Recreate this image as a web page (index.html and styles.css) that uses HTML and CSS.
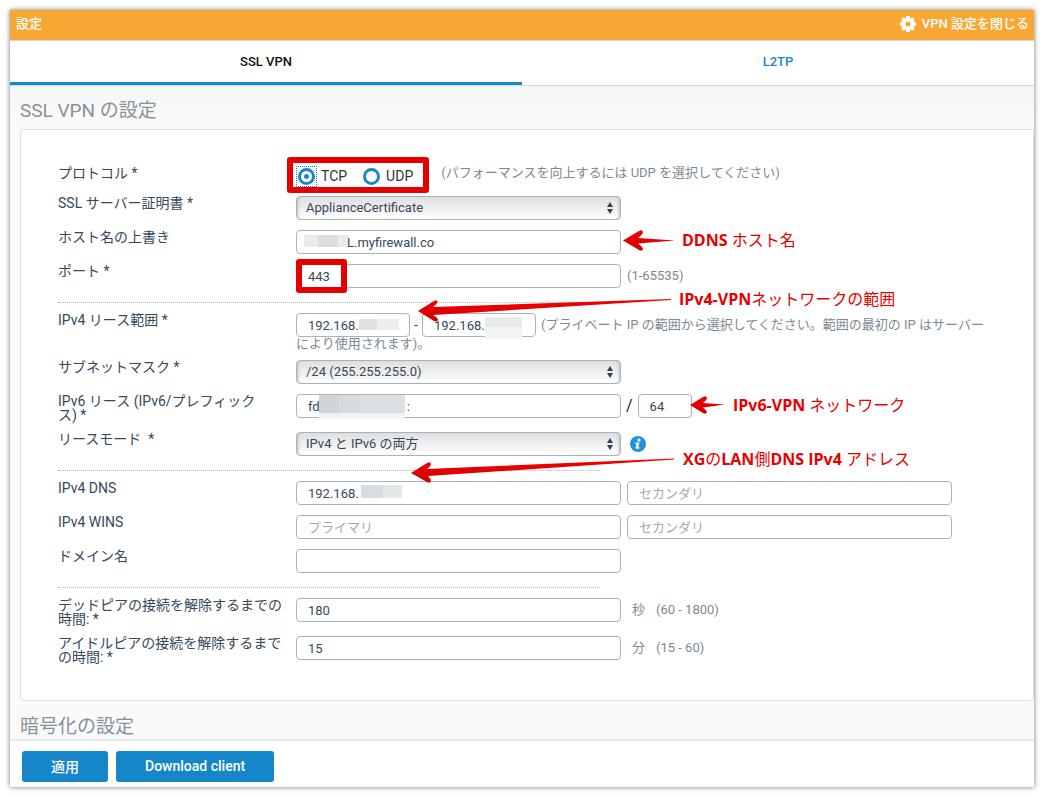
FILE: index.html
```html
<!DOCTYPE html>
<html lang="ja">
<head>
<meta charset="utf-8">
<title>VPN 設定</title>
<link rel="stylesheet" href="styles.css">
</head>
<body>
<div class="frame">
  <header class="topbar">
    <span>設定</span>
    <a class="close" href="#">
      <svg width="16" height="16" viewBox="0 0 16 16" aria-hidden="true">
        <g fill="#fff"><rect x="6" y="0" width="4" height="16" rx="1"/><rect x="0" y="6" width="16" height="4" rx="1"/><rect x="6" y="0" width="4" height="16" rx="1" transform="rotate(45 8 8)"/><rect x="6" y="0" width="4" height="16" rx="1" transform="rotate(-45 8 8)"/><circle cx="8" cy="8" r="6"/></g>
        <circle cx="8" cy="8" r="2.6" fill="#f7a734"/>
      </svg>
      <span>VPN 設定を閉じる</span>
    </a>
  </header>
  <nav class="tabs">
    <button class="tab active" type="button">SSL VPN</button>
    <button class="tab" type="button">L2TP</button>
  </nav>
  <main class="content">
    <h2 class="title">SSL VPN の設定</h2>
    <form class="card" id="vpn">
      <div class="group">
        <div class="row">
          <span class="label">プロトコル *</span>
          <div class="controls protocol">
            <label class="radio"><span class="ring focused"><input type="radio" name="proto" checked></span><span>TCP</span></label>
            <label class="radio"><span class="ring"><input type="radio" name="proto"></span><span>UDP</span></label>
            <span class="hint">(パフォーマンスを向上するには UDP を選択してください)</span>
          </div>
        </div>
        <div class="row">
          <label class="label" for="cert">SSL サーバー証明書 *</label>
          <div class="controls"><span class="select"><select id="cert" class="field"><option>ApplianceCertificate</option></select><svg class="updown" viewBox="0 0 8 12" aria-hidden="true"><path d="M4 0 7 5H1zM4 12 1 7h6z"/></svg></span></div>
        </div>
        <div class="row">
          <label class="label" for="host">ホスト名の上書き</label>
          <div class="controls"><span class="masked"><input id="host" class="field host" type="text" value="L.myfirewall.co"><i class="mask mask-host"></i></span></div>
        </div>
        <div class="row">
          <label class="label" for="port">ポート *</label>
          <div class="controls"><input id="port" class="field" type="text" value="443"><span class="hint">(1-65535)</span></div>
        </div>
      </div>
      <div class="group">
        <div class="row">
          <label class="label" for="from">IPv4 リース範囲 *</label>
          <div class="range"><span class="masked"><input id="from" class="field short" type="text" value="192.168."><i class="mask mask-from"></i></span><span class="dash">-</span><span class="masked"><input class="field short" type="text" aria-label="IPv4 リース範囲の終わり" value="192.168."><i class="mask mask-to"></i></span><span class="hint note">(プライベート IP の範囲から選択してください。範囲の最初の IP はサーバーにより使用されます)。</span></div>
        </div>
        <div class="row">
          <label class="label" for="subnet">サブネットマスク *</label>
          <div class="controls"><span class="select"><select id="subnet" class="field"><option>/24 (255.255.255.0)</option></select><svg class="updown" viewBox="0 0 8 12" aria-hidden="true"><path d="M4 0 7 5H1zM4 12 1 7h6z"/></svg></span></div>
        </div>
        <div class="row">
          <label class="label" for="v6">IPv6 リース (IPv6/プレフィックス)&nbsp;*</label>
          <div class="controls prefix"><span class="masked"><input id="v6" class="field" type="text" value="fd                           :"><i class="mask mask-v6"></i></span><span class="slash">/</span><input class="field tiny" type="text" aria-label="プレフィックス" value="64"></div>
        </div>
        <div class="row">
          <label class="label" for="mode">リースモード &nbsp;*</label>
          <div class="controls info-row"><span class="select"><select id="mode" class="field"><option>IPv4 と IPv6 の両方</option></select><svg class="updown" viewBox="0 0 8 12" aria-hidden="true"><path d="M4 0 7 5H1zM4 12 1 7h6z"/></svg></span>
            <svg class="info" width="16" height="16" viewBox="0 0 16 16" role="img" aria-label="情報"><circle cx="8" cy="8" r="8" fill="#2492d4"/><circle cx="9" cy="4" r="1.6" fill="#fff"/><path d="M5.6 6.6h3.8L8.3 11h1.2l-.3 1.4c-1.7.8-4 .6-3.5-1.2L6.5 8H5.3z" fill="#fff"/></svg></div>
        </div>
      </div>
      <div class="group">
        <div class="row">
          <label class="label" for="dns">IPv4 DNS</label>
          <div class="controls"><span class="masked"><input id="dns" class="field" type="text" value="192.168."><i class="mask mask-dns"></i></span><input class="field" type="text" aria-label="IPv4 DNS セカンダリ" placeholder="セカンダリ"></div>
        </div>
        <div class="row">
          <label class="label" for="wins">IPv4 WINS</label>
          <div class="controls"><input id="wins" class="field" type="text" placeholder="プライマリ"><input class="field" type="text" aria-label="IPv4 WINS セカンダリ" placeholder="セカンダリ"></div>
        </div>
        <div class="row">
          <label class="label" for="domain">ドメイン名</label>
          <div class="controls"><input id="domain" class="field" type="text"></div>
        </div>
      </div>
      <div class="group">
        <div class="row">
          <label class="label" for="dead">デッドピアの接続を解除するまでの時間: *</label>
          <div class="controls timed"><input id="dead" class="field" type="text" value="180"><span class="hint">秒</span><span class="hint">(60 - 1800)</span></div>
        </div>
        <div class="row">
          <label class="label" for="idle">アイドルピアの接続を解除するまでの時間: *</label>
          <div class="controls timed"><input id="idle" class="field" type="text" value="15"><span class="hint">分</span><span class="hint">(15 - 60)</span></div>
        </div>
      </div>
    </form>
    <h2 class="title second">暗号化の設定</h2>
  </main>
  <footer class="footer">
    <button class="btn" type="submit" form="vpn">適用</button>
    <button class="btn" type="button">Download client</button>
  </footer>

  <div class="annotations">
    <div class="box box-protocol"></div>
    <div class="box box-port"></div>
    <svg class="arrows" width="1024" height="777" viewBox="10 10 1024 777" aria-hidden="true">
      <defs><linearGradient id="red" x1="0" y1="0" x2="0" y2="1"><stop offset="0" stop-color="#f50000"/><stop offset="1" stop-color="#cf0000"/></linearGradient></defs>
      <g fill="url(#red)">
        <path d="M623 240.500 639 231Q642 229 643 232Q643 234 638 238L675 240.500 638 243.500Q643 247 643 249Q642 252 639 250Z"/>
        <path d="M418 311 434 301Q437 299 437.500 302Q437 304 433 307L671 299 671 300 433 315Q438 318 438 320Q437 322 434 321Z"/>
        <path d="M690 405 703 397Q706 395 707 398Q707 400 703 403L725 404.500 703 407.500Q707 411 707 412Q706 415 703 413Z"/>
        <path d="M411 473 427 463Q430 461 431 464Q431 466 427 469L674 458.500 674 459.500 428 476Q431 479 431 481Q430 484 427 482Z"/>
      </g>
    </svg>
    <p class="callout c-host"><b>DDNS</b> ホスト名</p>
    <p class="callout c-v4"><b>IPv4-VPN</b>ネットワークの範囲</p>
    <p class="callout c-v6"><b>IPv6-VPN</b> ネットワーク</p>
    <p class="callout c-dns"><b>XG</b>の<b>LAN</b>側<b>DNS IPv4</b> アドレス</p>
  </div>
</div>
</body>
</html>
```
FILE: styles.css
```css
* { box-sizing: border-box; }
body { margin: 0; padding: 10px; background: #fff; color: #34495a; font: 14px/14px Roboto, "Noto Sans CJK JP", sans-serif; }
button, input, select { font-family: inherit; }

.frame { position: relative; display: flex; flex-direction: column; height: calc(100vh - 20px); background: #fff; box-shadow: 0 0 5px rgba(0, 0, 0, .55); }

.topbar { display: flex; justify-content: space-between; align-items: center; height: 31px; padding: 0 5px 3px 6px; background: #f7a734; border-bottom: 1px solid #d9d4cb; color: #fff; font-size: 13px; font-weight: 500; flex: none; }
.close { display: flex; align-items: center; gap: 6px; color: #fff; text-decoration: none; }

.tabs { display: grid; grid-template-columns: 1fr 1fr; height: 45px; border-bottom: 1px solid #d8dbdd; flex: none; }
.tab { border: 0; border-bottom: 3px solid transparent; padding: 0; background: #fff; color: #1887cb; font-size: 13px; font-weight: 500; }
.tab.active { border-color: #1887cb; color: #111; }

.content { flex: 1; min-height: 0; overflow: hidden; padding: 15px 0 0 10px; background: linear-gradient(#f4f5f6, #fafafa 30px); }
.title { margin: 0; color: #86929a; font-size: 19px; line-height: 20px; font-weight: 400; }
.title.second { margin-top: 16px; }
.card { margin-top: 8px; padding: 36px 37px; background: #fff; border: 1px solid #dcdee0; border-radius: 4px; }

.group { display: grid; gap: 10px; }
.group + .group { margin-top: 14px; }
.group + .group::before { content: ""; width: 542px; border-top: 1px dotted #b5babd; }
.row { display: grid; grid-template-columns: 224px 1fr; column-gap: 14px; align-items: start; }
.controls { display: flex; align-items: center; gap: 6px; }
.hint { color: #7b8a94; font-size: 13px; }

.field { display: block; width: 325px; height: 24px; padding: 0 11px; border: 1px solid #a9b3ba; border-radius: 4px; background: #fff; color: #34495a; font-size: 13px; line-height: 18px; outline: 0; }
.field::placeholder { color: #a5a8aa; opacity: 1; }
.short { width: 114px; }
.tiny { width: 54px; }
.host { padding-left: 50px; }
.select { position: relative; }
select.field { appearance: none; padding: 0 9px; background: linear-gradient(#dfdfdf, #f2f2f2 60%, #fff); box-shadow: inset 3px 0 3px -2px #b8bcc0, inset -3px 0 3px -2px #b8bcc0; }
.updown { position: absolute; right: 7px; top: 6px; width: 8px; height: 12px; fill: #2c4152; pointer-events: none; }

.protocol { height: 20px; }
.protocol .hint { align-self: flex-start; margin-left: 21px; }
.radio { display: flex; align-items: center; gap: 4px; margin-right: 8px; color: #333; }
.radio + .radio { margin-right: 1px; }
.ring { padding: 1px; border: 1px solid transparent; }
.ring.focused { border: 1px dotted #1887cb; }
.radio input { display: block; appearance: none; width: 17px; height: 17px; margin: 0; border: 3px solid #1887cb; border-radius: 50%; background: #fff; }
.radio input:checked { background: radial-gradient(circle, #1887cb 2px, #fff 3px); }

.range { line-height: 13px; max-width: 694px; }
.range .masked { display: inline-block; vertical-align: middle; }
.dash { display: inline-block; width: 12px; text-align: center; vertical-align: middle; }
.note { margin-left: 5px; }
.slash { color: #222; font-size: 16px; }
.prefix { gap: 5px; }
.info-row { gap: 9px; }
.timed { gap: 11px; }

.masked { position: relative; }
.mask { position: absolute; }
.mask-host { left: 8px; top: 5px; width: 44px; height: 12px; background: linear-gradient(90deg, #ececee 0 14px, #dcdfe1 14px 34px, #e9eaec 34px); }
.mask-from { left: 63px; top: 6px; width: 40px; height: 11px; background: linear-gradient(90deg, #e0e2e4 0 18px, #eceeef 18px); }
.mask-to { left: 63px; top: 4px; width: 37px; height: 22px; background: linear-gradient(#e8eaeb 0 10px, #f2f3f4 10px); }
.mask-v6 { left: 23px; top: 1px; width: 86px; height: 24px; background: linear-gradient(90deg, #d0d5d9 0 20px, #d7dbdf 20px 42px, #dde0e3 42px) 0 0 / 100% 18px no-repeat, #f2f3f5; }
.mask-dns { left: 65px; top: 4px; width: 41px; height: 13px; background: linear-gradient(90deg, #dadde0 0 22px, #e5e8e9 22px); }

.footer { display: flex; align-items: center; gap: 8px; height: 48px; padding: 5px 12px 0; border-top: 2px solid #e6e8ea; background: #fff; flex: none; }
.btn { height: 31px; padding: 0 29px 2px; border: 0; border-radius: 3px; background: #1586c9; color: #fff; font-size: 14px; font-weight: 500; }

.annotations { position: absolute; inset: 0; pointer-events: none; }
.arrows { position: absolute; left: 0; top: 0; }
.box { position: absolute; border: 6px solid #e60000; border-radius: 3px; }
.box-protocol { left: 277px; top: 147px; width: 142px; height: 36px; }
.box-port { left: 286px; top: 249px; width: 51px; height: 34px; }
.callout { position: absolute; margin: 0; color: #e60000; font: 400 16px/20px "Open Sans", "Noto Sans CJK JP", sans-serif; white-space: nowrap; }
.c-host { left: 672px; top: 220px; }
.c-v4 { left: 669px; top: 279px; }
.c-v6 { left: 723px; top: 385px; }
.c-dns { left: 673px; top: 439px; }
```
